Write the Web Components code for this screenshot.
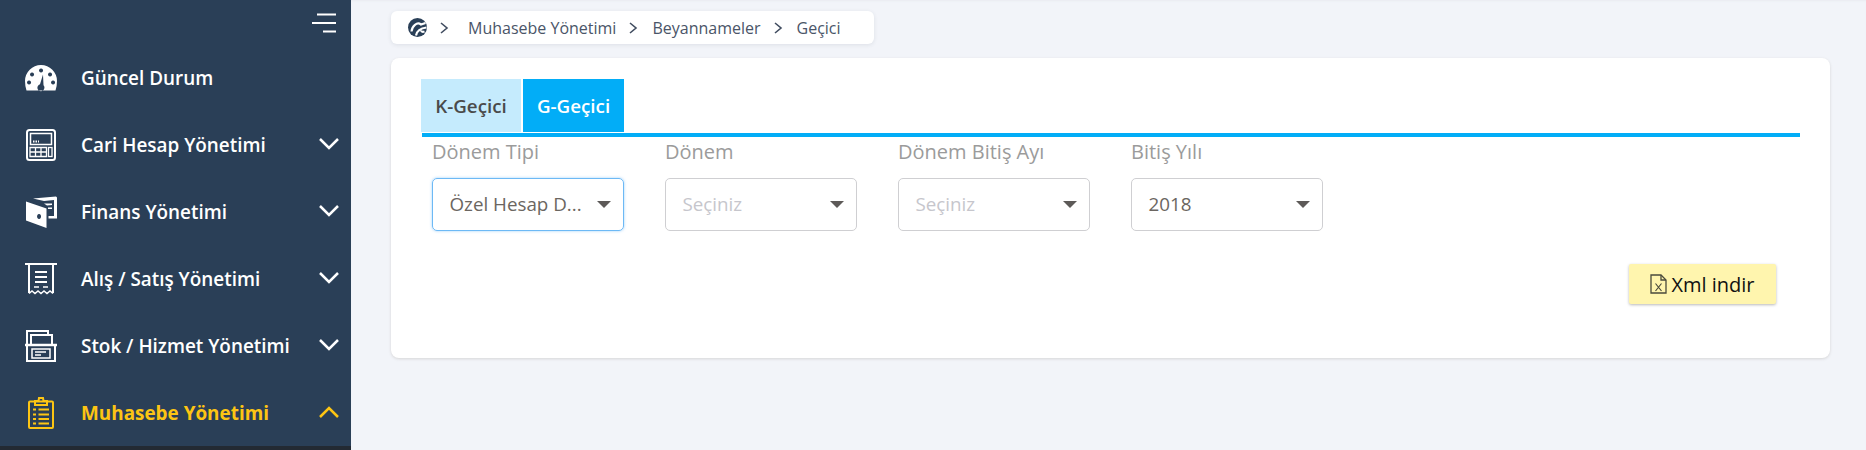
<!DOCTYPE html>
<html lang="tr">
<head>
<meta charset="utf-8">
<title>Geçici</title>
<style>
    html, body { margin: 0; height: 100%; overflow: hidden; }
    body {
        display: flex;
        background: #f2f4f9;
        font-family: "Open Sans", sans-serif;
    }
</style>
</head>
<body>
<side-bar>
    <nav-item label="Güncel Durum" plain>
        <svg slot="icon" viewBox="0 0 34 28" width="34" height="28"><path fill="#fff" fill-rule="evenodd" d="M2.500 26.500Q1 22 1 17A16 16 0 0 1 33 17Q33 22 31.500 26.500zM17 4.500a2 2 0 1 0 .1 0zM8 8.500a2 2 0 1 0 .1 0zM26 8.500a2 2 0 1 0 .1 0zM5 16.500a2 2 0 1 0 .1 0zM29 16.500a2 2 0 1 0 .1 0zM19 10.500l-3 9.800a3.500 3.500 0 1 0 3.500 1z"/></svg>
    </nav-item>
    <nav-item label="Cari Hesap Yönetimi">
        <svg slot="icon" viewBox="0 0 30 32" width="30" height="32" fill="none" stroke="#fff"><rect x="1" y="1" width="28" height="30" rx="2.500" stroke-width="2"/><rect x="4.500" y="4.500" width="21" height="11" stroke-width="1.500"/><path d="M7 12.500h6" stroke-width="2" stroke-dasharray="1.500 1"/><path d="M4 18.500h16.500v9H4zM9.500 18.500v9M15 18.500v9M4 23h16.500" stroke-width="1.300"/><rect x="22.500" y="18.500" width="3.500" height="9" stroke-width="1.300"/></svg>
    </nav-item>
    <nav-item label="Finans Yönetimi">
        <svg slot="icon" viewBox="0 0 32 32" width="32" height="32"><path fill="#fff" fill-rule="evenodd" d="M1 5.500L21.500 12.500V32L1 24.500zM14 18a2 2.500 0 1 0 .1 0z"/><path fill="#fff" d="M8 2.500L31 0.500l1 1V22.500H23.500V20H29V4l-10 1z"/><path fill="#fff" d="M19 7.500h8V9l-5 .5zM23 11.500h4V13h-4z"/></svg>
    </nav-item>
    <nav-item label="Alış / Satış Yönetimi">
        <svg slot="icon" viewBox="0 0 32 32" width="32" height="32" fill="none" stroke="#fff" stroke-width="2"><path d="M0 1h32"/><path d="M4 1v29M28 1v29"/><path d="M10 9h12M10 14h12M10 19h12" stroke-width="2"/><path d="M9 24h5M18 24h5" stroke-width="1.500"/><path d="M4 30.500l3-2.500 3 2.500 3-2.500 3 2.500 3-2.500 3 2.500 3-2.500 3 2.500" stroke-width="1.500"/></svg>
    </nav-item>
    <nav-item label="Stok / Hizmet Yönetimi">
        <svg slot="icon" viewBox="0 0 32 32" width="32" height="32" fill="none" stroke="#fff" stroke-width="2"><path d="M2 14V1h21v3"/><path d="M6 14V5h21v9"/><path d="M0 15h32" stroke-width="2.500"/><path d="M2 15v16h28V15"/><rect x="7" y="19" width="18" height="9" stroke-width="1.500"/><path d="M10 22h11M10 25h6" stroke-width="1.500"/></svg>
    </nav-item>
    <nav-item label="Muhasebe Yönetimi" active>
        <svg slot="icon" viewBox="0 0 26 32" width="26" height="32" fill="none" stroke="#fdc513" stroke-width="2"><rect x="1" y="4.500" width="24" height="26.500" rx="1"/><path d="M7 8V4h3.500L11 1h4l.5 3H19v4z"/><path d="M5 12.500h3M10.500 12.500H21M5 17.500h3M10.500 17.500H21M5 22h3M10.500 22H21M5 26.500h3M10.500 26.500H21" stroke-width="2"/></svg>
    </nav-item>
</side-bar>
<main-area>
    <bread-crumb>
        <span>Muhasebe Yönetimi</span>
        <span>Beyannameler</span>
        <span>Geçici</span>
    </bread-crumb>
    <form-card>
        <tab-bar></tab-bar>
        <filter-row>
            <select-box label="Dönem Tipi" value="Özel Hesap Dönemi" focused></select-box>
            <select-box label="Dönem" value="Seçiniz" placeholder></select-box>
            <select-box label="Dönem Bitiş Ayı" value="Seçiniz" placeholder></select-box>
            <select-box label="Bitiş Yılı" value="2018"></select-box>
        </filter-row>
        <xml-button>Xml indir</xml-button>
    </form-card>
</main-area>

<script>
class SideBar extends HTMLElement {
    constructor() {
        super();
        this.attachShadow({ mode: 'open' });
        this.shadowRoot.innerHTML = `
            <style>
                :host {
                    display: block;
                    flex: none;
                    width: 351px;
                    height: 450px;
                    box-sizing: border-box;
                    background: #2a3f57;
                    border-bottom: 4px solid #232a33;
                    overflow: hidden;
                }
                .toggle {
                    display: flex;
                    justify-content: flex-end;
                    height: 44px;
                    padding: 13px 15px 0 0;
                    box-sizing: border-box;
                }
            </style>
            <div class="toggle">
                <svg width="24" height="21" viewBox="0 0 24 21" fill="none" stroke="#fff" stroke-width="2">
                    <path d="M5 1.500h19M0 10h24M11 18.500h13"/>
                </svg>
            </div>
            <slot></slot>
        `;
    }
}

class NavItem extends HTMLElement {
    constructor() {
        super();
        this.attachShadow({ mode: 'open' });
        const open = this.hasAttribute('active');
        const chevron = this.hasAttribute('plain') ? '' : `
            <svg class="chevron" width="20" height="12" viewBox="0 0 20 12" fill="none" stroke="currentColor" stroke-width="2.500">
                <path d="${open ? 'M1 11l9-9 9 9' : 'M1 1l9 9 9-9'}"/>
            </svg>`;
        this.shadowRoot.innerHTML = `
            <style>
                :host {
                    display: flex;
                    align-items: center;
                    height: 67px;
                    color: #fff;
                    font-size: 18.900px;
                    font-weight: 600;
                }
                :host([active]) { color: #fdc513; font-weight: 700; }
                .icon {
                    display: flex;
                    justify-content: center;
                    align-items: center;
                    width: 34px;
                    margin-left: 24px;
                    margin-right: 23px;
                }
                .label { flex: 1; white-space: nowrap; }
                .chevron { margin-right: 12px; margin-top: -2px; }
            </style>
            <span class="icon"><slot name="icon"></slot></span>
            <span class="label">${this.getAttribute('label')}</span>
            ${chevron}
        `;
    }
}

class MainArea extends HTMLElement {
    constructor() {
        super();
        this.attachShadow({ mode: 'open' });
        this.shadowRoot.innerHTML = `
            <style>
                :host {
                    display: block;
                    flex: 1;
                    padding: 11px 36px 0 40px;
                    box-shadow: inset 0 2px 2px -1px #e9ebf0;
                }
            </style>
            <slot></slot>
        `;
    }
}

class BreadCrumb extends HTMLElement {
    constructor() {
        super();
        this.attachShadow({ mode: 'open' });
        const sep = `<svg class="sep" width="9" height="12" viewBox="0 0 9 12" fill="none" stroke="#414d60" stroke-width="1.600"><path d="M1 1l6 5-6 5"/></svg>`;
        this.shadowRoot.innerHTML = `
            <style>
                :host {
                    display: flex;
                    width: 483px;
                    height: 33px;
                    box-sizing: border-box;
                    align-items: center;
                    padding-left: 17px;
                    background: #fff;
                    border-radius: 6px;
                    box-shadow: 0 1px 4px rgba(40, 50, 70, .1);
                    color: #4a5568;
                    font-size: 16px;
                    white-space: nowrap;
                }
                .logo { margin-right: 13px; }
                .items { display: flex; align-items: center; }
                .sep { margin: 0 14px 0 13px; flex: none; }
            </style>
            <svg class="logo" width="19" height="19" viewBox="0 0 19 19">
                <circle cx="9.500" cy="9.500" r="9.500" fill="#2a3f57"/>
                <path d="M3.500 13.500C4 8 9 3.500 13 6.500L17.500 5M8 17.500C9 12.500 13 10 18.500 9.500M13 12.500c.5 1.500 2 1.500 3.500 1" fill="none" stroke="#fff" stroke-width="2.200"/>
            </svg>
            <svg style="margin-right:19px;flex:none" width="9" height="12" viewBox="0 0 9 12" fill="none" stroke="#414d60" stroke-width="1.600"><path d="M1 1l6 5-6 5"/></svg>
            <span class="items" id="items"></span>
        `;
        // Separators go between the crumbs, which stay in the light DOM
        const box = this.shadowRoot.getElementById('items');
        [...this.children].forEach((c, i) => {
            const s = document.createElement('slot');
            s.name = 'c' + i;
            c.slot = 'c' + i;
            if (i > 0) box.insertAdjacentHTML('beforeend', sep);
            box.appendChild(s);
        });
    }
}

class FormCard extends HTMLElement {
    constructor() {
        super();
        this.attachShadow({ mode: 'open' });
        this.shadowRoot.innerHTML = `
            <style>
                :host {
                    display: block;
                    height: 300px;
                    margin-top: 14px;
                    box-sizing: border-box;
                    padding: 21px 30px 0;
                    background: #fff;
                    border-radius: 8px;
                    box-shadow: 0 1px 3px rgba(90, 80, 60, .18);
                }
            </style>
            <slot></slot>
        `;
    }
}

class TabBar extends HTMLElement {
    constructor() {
        super();
        this.attachShadow({ mode: 'open' });
        this.shadowRoot.innerHTML = `
            <style>
                :host {
                    display: flex;
                    gap: 2px;
                    height: 58px;
                    box-sizing: border-box;
                    border-bottom: 4px solid #02adf7;
                    padding-bottom: 1px;
                    margin-left: 1px;
                }
                div {
                    display: flex;
                    align-items: center;
                    justify-content: center;
                    height: 53px;
                    font-size: 18.800px;
                    font-weight: 600;
                }
                .k { width: 100px; margin-left: -1px; background: #c5ebfd; color: #4a4a4a; }
                .g { width: 101px; background: #02adf7; color: #fff; }
            </style>
            <div class="k">K-Geçici</div>
            <div class="g">G-Geçici</div>
        `;
    }
}

class FilterRow extends HTMLElement {
    constructor() {
        super();
        this.attachShadow({ mode: 'open' });
        this.shadowRoot.innerHTML = `
            <style>
                :host {
                    display: flex;
                    gap: 41px;
                    padding: 1px 0 0 11px;
                }
            </style>
            <slot></slot>
        `;
    }
}

class SelectBox extends HTMLElement {
    constructor() {
        super();
        this.attachShadow({ mode: 'open' });
        const raw = this.getAttribute('value');
        // The reference cuts long values at the end of the box
        const text = raw.length > 14 ? raw.slice(0, 12) + '...' : raw;
        this.shadowRoot.innerHTML = `
            <style>
                :host {
                    display: block;
                    width: 192px;
                }
                label {
                    display: block;
                    height: 40px;
                    line-height: 27px;
                    font-size: 20px;
                    color: #9b9b9b;
                    white-space: nowrap;
                }
                .box {
                    display: flex;
                    align-items: center;
                    justify-content: space-between;
                    height: 53px;
                    box-sizing: border-box;
                    padding: 0 12px 2px 16.500px;
                    border: 1px solid #cfcfd2;
                    border-radius: 5px;
                    color: #6b6661;
                    font-size: 18.800px;
                    white-space: nowrap;
                }
                :host([placeholder]) .box { color: #c6c6cc; }
                :host([focused]) .box {
                    border-color: #6db9f5;
                    box-shadow: 0 0 3px rgba(80, 170, 245, .55);
                }
                .arrow {
                    flex: none;
                    margin-top: 2px;
                    border-top: 7px solid #5d5a58;
                    border-left: 7px solid transparent;
                    border-right: 7px solid transparent;
                }
            </style>
            <label>${this.getAttribute('label')}</label>
            <div class="box">
                <span class="val">${text}</span>
                <span class="arrow"></span>
            </div>
        `;
    }
}

class XmlButton extends HTMLElement {
    constructor() {
        super();
        this.attachShadow({ mode: 'open' });
        this.shadowRoot.innerHTML = `
            <style>
                :host {
                    display: flex;
                    align-items: center;
                    justify-content: center;
                    gap: 4px;
                    width: 147px;
                    height: 40px;
                    margin: 33px 24px 0 auto;
                    background: #fff5ae;
                    border-radius: 2px;
                    box-shadow: 0 1px 3px rgba(0, 0, 0, .28);
                    color: #111;
                    font-size: 20px;
                }
            </style>
            <svg width="17" height="20" viewBox="0 0 17 20" fill="none" stroke="#4a4a3c" stroke-width="1.300">
                <path d="M1 1h10l5 5v13H1z"/><path d="M11 1v5h5"/>
                <path d="M5.500 9.500l6 7.500M11.500 9.500l-6 7.500" stroke-width="1.200"/>
            </svg>
            <span><slot></slot></span>
        `;
    }
}

customElements.define('side-bar', SideBar);
customElements.define('nav-item', NavItem);
customElements.define('main-area', MainArea);
customElements.define('bread-crumb', BreadCrumb);
customElements.define('form-card', FormCard);
customElements.define('tab-bar', TabBar);
customElements.define('filter-row', FilterRow);
customElements.define('select-box', SelectBox);
customElements.define('xml-button', XmlButton);
</script>
</body>
</html>
